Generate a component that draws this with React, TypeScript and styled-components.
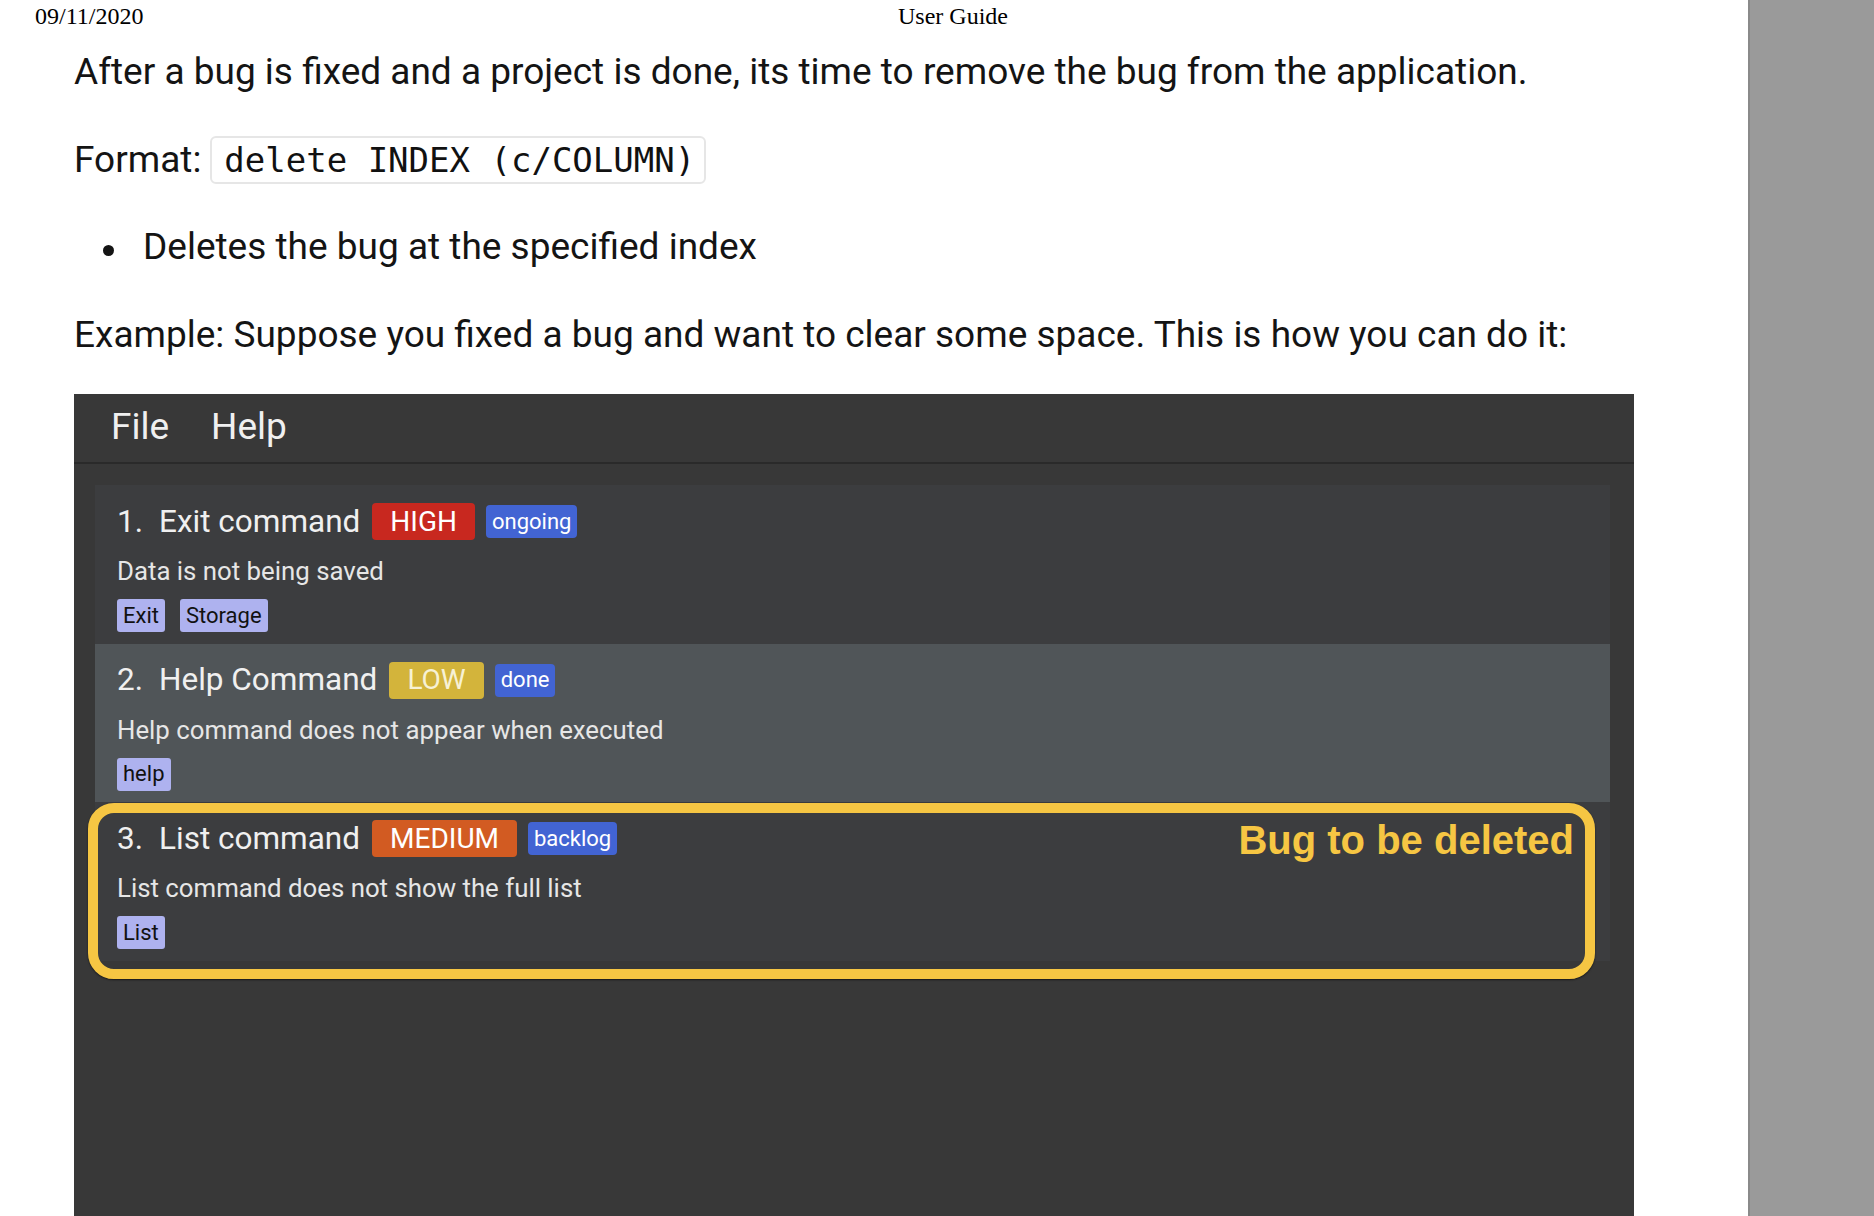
import React from 'react';
import styled, { createGlobalStyle } from 'styled-components';

const GlobalStyle = createGlobalStyle`
  html, body { margin: 0; padding: 0; }
  body { background: #fff; overflow: hidden; }
  * { box-sizing: border-box; }
`;

const Screen = styled.div`
  display: flex;
  width: 1874px;
  height: 1216px;
  overflow: hidden;
`;

const Sheet = styled.main`
  flex: none;
  width: 1748px;
  display: flex;
  flex-direction: column;
  background: #fff;
`;

const Gutter = styled.aside`
  flex: 1;
  background: #9a9a9a;
  border-left: 2px solid #8a8a8a;
`;

const PrintHeader = styled.header`
  display: grid;
  grid-template-columns: 863px auto;
  height: 30px;
  padding: 2px 0 0 35px;
  font-family: 'Liberation Serif', serif;
  font-size: 24px;
  line-height: 28px;
  color: #000;
`;

const Body = styled.div`
  flex: 1;
  min-height: 0;
  display: flex;
  flex-direction: column;
  padding-left: 74px;
  font-family: Roboto, sans-serif;
  font-size: 37px;
  line-height: 44px;
  color: #141414;
`;

const Para = styled.p<{ $top: number }>`
  margin: ${(p) => p.$top}px 0 0;
`;

const FormatRow = styled.div`
  display: flex;
  align-items: baseline;
  margin-top: 42px;
  line-height: 48px;
`;

const Code = styled.code`
  margin-left: 9px;
  padding: 0 9px 0 12px;
  border: 2px solid #e6e6e6;
  border-radius: 6px;
  font-family: 'DejaVu Sans Mono', monospace;
  font-size: 34px;
  line-height: 44px;
  color: #111;
`;

const List = styled.ul`
  margin: 41px 0 0;
  padding: 0 0 0 29px;
  list-style: none;
`;

const Item = styled.li`
  display: flex;
  align-items: center;
`;

const Dot = styled.span`
  width: 11px;
  height: 11px;
  margin: 6px 29px 0 0;
  border-radius: 50%;
  background: #141414;
`;

const AppWindow = styled.section`
  flex: 1;
  width: 1560px;
  margin-top: 37px;
  display: flex;
  flex-direction: column;
  background: #383838;
  font-family: Roboto, sans-serif;
  color: #f0f0f0;
`;

const MenuBar = styled.nav`
  display: flex;
  gap: 42px;
  height: 70px;
  padding-left: 37px;
  border-bottom: 2px solid #2a2a2a;
  font-size: 37px;
  line-height: 66px;
`;

const BugList = styled.div`
  display: flex;
  flex-direction: column;
  padding: 21px 24px 0 21px;
`;

const Card = styled.article<{ $selected?: boolean }>`
  position: relative;
  padding: 18px 22px 11.5px;
  background: ${(p) => (p.$selected ? '#505558' : '#3c3d3f')};
`;

const TitleRow = styled.div`
  display: flex;
  align-items: center;
  height: 37px;
  font-size: 31.5px;
`;

const Index = styled.span`
  margin-right: 16px;
`;

const Title = styled.span`
  margin-right: 12px;
`;

const PRIORITY = {
  HIGH: { bg: '#c8281f', fg: '#ffffff' },
  LOW: { bg: '#d3b43b', fg: '#f7f1d4' },
  MEDIUM: { bg: '#d25b22', fg: '#ffffff' },
};

type Priority = keyof typeof PRIORITY;

const PriorityBadge = styled.span<{ $level: Priority }>`
  display: flex;
  align-items: center;
  height: 37px;
  padding: 0 18px;
  margin-right: 11px;
  border-radius: 4px;
  background: ${(p) => PRIORITY[p.$level].bg};
  color: ${(p) => PRIORITY[p.$level].fg};
  font-size: 28px;
`;

const StatusBadge = styled.span`
  display: flex;
  align-items: center;
  height: 33px;
  padding: 0 6px;
  border-radius: 4px;
  background: #4264d3;
  color: #fff;
  font-size: 22px;
`;

const Description = styled.div`
  margin-top: 15px;
  font-size: 25.8px;
  line-height: 32px;
  color: #e6e6e6;
`;

const Tags = styled.div`
  display: flex;
  gap: 15px;
  margin-top: 12px;
`;

const Tag = styled.span`
  display: flex;
  align-items: center;
  height: 33px;
  padding: 0 6px;
  border-radius: 3px;
  background: #aeb2ef;
  color: #111;
  font-size: 22px;
`;

const Highlight = styled.div`
  position: absolute;
  top: 1px;
  left: -7px;
  right: 15px;
  bottom: -18px;
  border: 10px solid #f6c643;
  border-radius: 26px;
  box-shadow: 0 1px 2px rgba(0, 0, 0, 0.6);
  pointer-events: none;
`;

const Callout = styled.span`
  position: absolute;
  top: 16px;
  right: 36px;
  font-family: 'Liberation Sans', Arial, sans-serif;
  font-weight: 700;
  font-size: 40px;
  color: #f6c643;
`;

type Bug = {
  title: string;
  priority: Priority;
  status: string;
  description: string;
  tags: string[];
};

const BUGS: Bug[] = [
  { title: 'Exit command', priority: 'HIGH', status: 'ongoing', description: 'Data is not being saved', tags: ['Exit', 'Storage'] },
  { title: 'Help Command', priority: 'LOW', status: 'done', description: 'Help command does not appear when executed', tags: ['help'] },
  { title: 'List command', priority: 'MEDIUM', status: 'backlog', description: 'List command does not show the full list', tags: ['List'] },
];

const App: React.FC = () => {
  return (
    <Screen>
      <GlobalStyle />
      <Sheet>
        <PrintHeader>
          <span>09/11/2020</span>
          <span>User Guide</span>
        </PrintHeader>
        <Body>
          <Para $top={20}>
            After a bug is fixed and a project is done, its time to remove the bug from the application.
          </Para>
          <FormatRow>
            Format:<Code>delete INDEX (c/COLUMN)</Code>
          </FormatRow>
          <List>
            <Item>
              <Dot />
              Deletes the bug at the specified index
            </Item>
          </List>
          <Para $top={44}>
            Example: Suppose you fixed a bug and want to clear some space. This is how you can do it:
          </Para>
          <AppWindow>
            <MenuBar>
              <span>File</span>
              <span>Help</span>
            </MenuBar>
            <BugList>
              {BUGS.map((bug, i) => (
                <Card key={bug.title} $selected={i === 1}>
                  <TitleRow>
                    <Index>{i + 1}.</Index>
                    <Title>{bug.title}</Title>
                    <PriorityBadge $level={bug.priority}>{bug.priority}</PriorityBadge>
                    <StatusBadge>{bug.status}</StatusBadge>
                  </TitleRow>
                  <Description>{bug.description}</Description>
                  <Tags>
                    {bug.tags.map((t) => (
                      <Tag key={t}>{t}</Tag>
                    ))}
                  </Tags>
                  {i === 2 && (
                    <>
                      <Highlight />
                      <Callout>Bug to be deleted</Callout>
                    </>
                  )}
                </Card>
              ))}
            </BugList>
          </AppWindow>
        </Body>
      </Sheet>
      <Gutter />
    </Screen>
  );
};

export default App;
